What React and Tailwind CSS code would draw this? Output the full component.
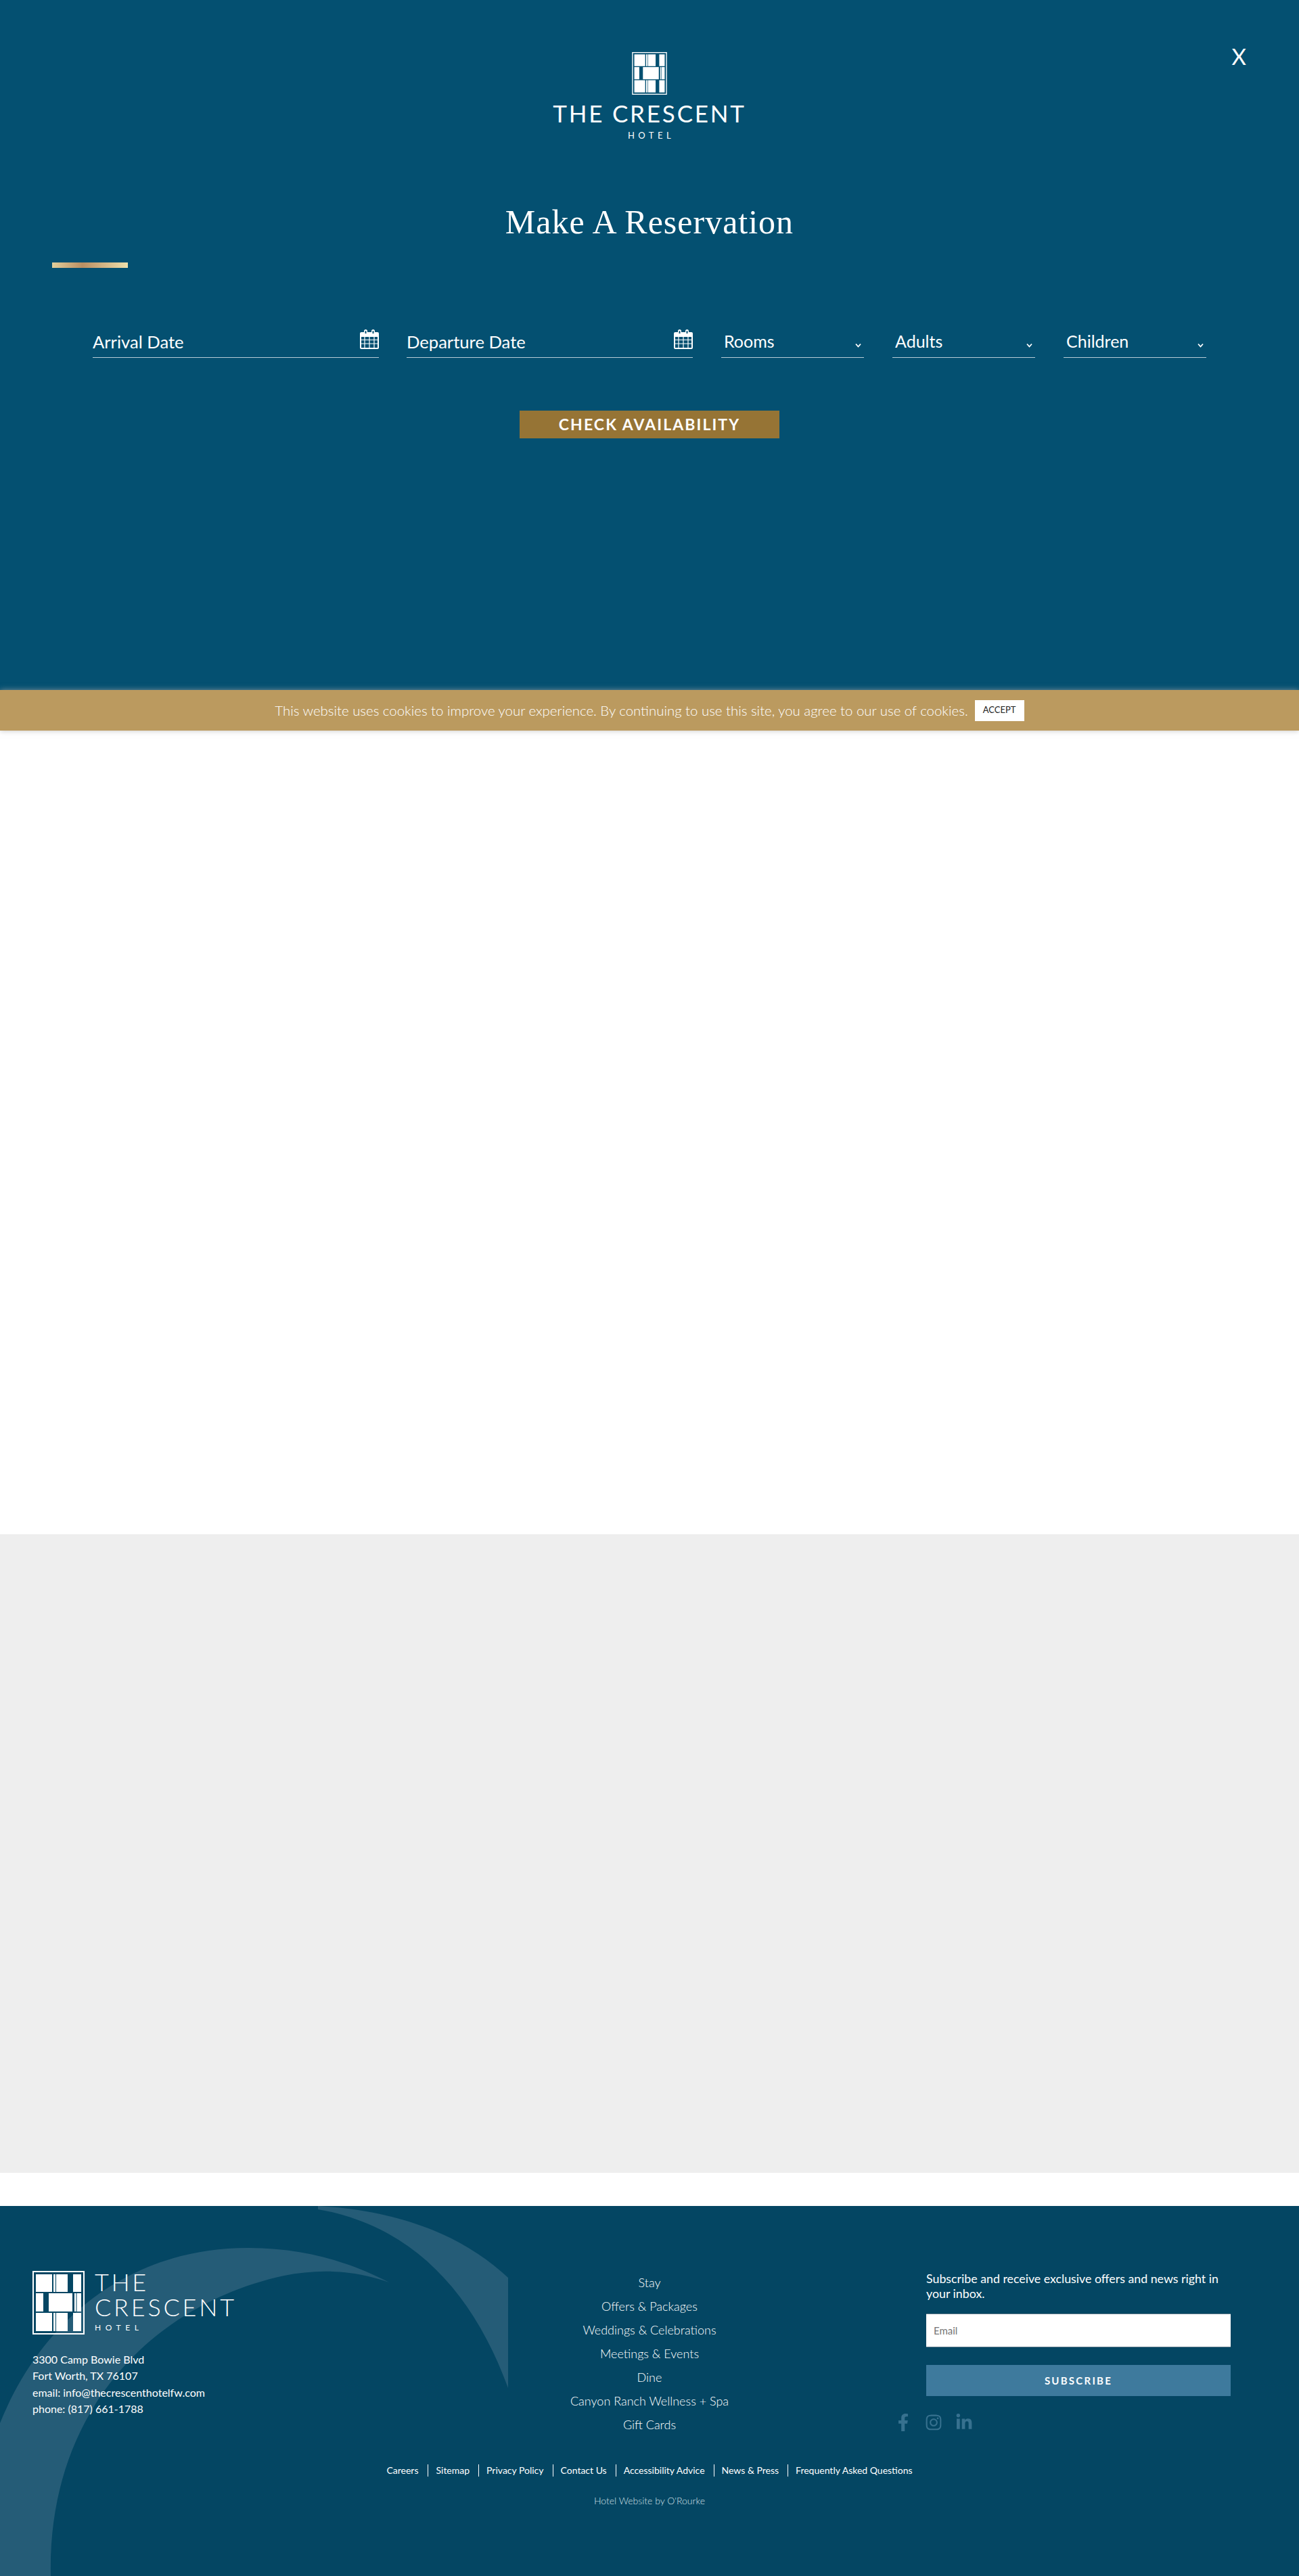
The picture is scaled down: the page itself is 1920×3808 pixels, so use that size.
import { FaFacebookF, FaInstagram, FaLinkedinIn } from "react-icons/fa";

const lato = { fontFamily: "Lato, sans-serif" };

function LogoMark({ className, frame = "#ffffff" }) {
  const rows = [
    { y: 5, h: 26, cells: [[5, 24], [31, 3], [35, 17], [60, 12]] },
    { y: 33, h: 27, cells: [[5, 11], [24, 35], [62, 2.5], [65.5, 6.5]] },
    { y: 62, h: 27, cells: [[5, 24], [31, 3], [35, 17], [60, 12]] },
  ];
  return (
    <svg viewBox="0 0 77 94" className={className}>
      <rect x="1" y="1" width="75" height="92" fill="none" stroke={frame} strokeWidth="2" />
      {rows.map((row) =>
        row.cells.map(([x, w]) => (
          <rect key={`${row.y}-${x}`} x={x} y={row.y} width={w} height={row.h} fill="#ffffff" />
        ))
      )}
    </svg>
  );
}

function CalendarIcon() {
  return (
    <svg viewBox="0 0 28 29" className="w-[28px] h-[29px] shrink-0">
      <path d="M2 4h4V2.5a2.5 2.5 0 0 1 5 0V4h6V2.5a2.5 2.5 0 0 1 5 0V4h4a2 2 0 0 1 2 2v5H0V6a2 2 0 0 1 2-2z" fill="#ffffff" />
      <path d="M7.5 3a1 1 0 0 1 2 0v3h-2zM18.5 3a1 1 0 0 1 2 0v3h-2z" fill="#045071" />
      <path d="M1 10h26v17a1 1 0 0 1-1 1H2a1 1 0 0 1-1-1z" fill="none" stroke="#ffffff" strokeWidth="2" />
      <path d="M7 11v16M14 11v16M21 11v16M2 15.5h24M2 21h24" stroke="#ffffff" strokeWidth="1.2" />
    </svg>
  );
}

function Chevron() {
  return (
    <svg viewBox="0 0 9 7" className="w-[9px] h-[7px] mt-[6px]">
      <path d="M1 1.5l3.5 4 3.5-4" fill="none" stroke="#ffffff" strokeWidth="1.8" />
    </svg>
  );
}

function DateField({ label }) {
  return (
    <div className="w-[423px] h-[42px] flex items-start justify-between border-b border-[#b7ccd6]">
      <span className="text-[25.6px] leading-[33px] mt-[2px] text-white">{label}</span>
      <CalendarIcon />
    </div>
  );
}

function SelectField({ label }) {
  return (
    <div className="w-[211px] h-[42px] pl-[4px] pr-[4px] flex items-center justify-between border-b border-[#b7ccd6]">
      <span className="text-[25px] leading-[33px] text-white -mt-[6px]">{label}</span>
      <Chevron />
    </div>
  );
}

function Reservation() {
  return (
    <section className="relative h-[1020px] bg-[#045071] pt-[77px] flex flex-col items-center text-white" style={lato}>
      <button className="absolute top-[59px] right-[78px] text-[33px] leading-[48px] font-normal">X</button>
      <LogoMark className="w-[52px] h-[63px]" />
      <div className="mt-[6px] text-[35px] leading-[42px] font-normal tracking-[0.08em] whitespace-nowrap">THE CRESCENT</div>
      <div className="mt-[4px] pl-[5px] text-[13px] leading-[16px] tracking-[0.42em]">HOTEL</div>
      <h1 className="mt-[90px] text-[50px] leading-[60px] tracking-[0.02em]" style={{ fontFamily: '"Liberation Serif", serif' }}>
        Make A Reservation
      </h1>
      <div className="self-start ml-[77px] mt-[30px] w-[112px] h-[8px] bg-gradient-to-r from-[#e2cf9c] via-[#b98f63] via-40% to-[#efe0ac]" />
      <div className="self-start ml-[137px] mt-[91px] flex">
        <DateField label="Arrival Date" />
        <div className="ml-[41px]">
          <DateField label="Departure Date" />
        </div>
        <div className="ml-[42px] flex gap-[42px]">
          <SelectField label="Rooms" />
          <SelectField label="Adults" />
          <SelectField label="Children" />
        </div>
      </div>
      <button className="mt-[78px] w-[384px] h-[41px] bg-[#967435] text-[23px] font-bold tracking-[0.09em] text-white">
        CHECK AVAILABILITY
      </button>
    </section>
  );
}

function CookieBar() {
  return (
    <div className="relative z-10 h-[60px] bg-[#bb9a5f] flex items-center justify-center shadow-[0_0_8px_rgba(170,170,170,0.7)]" style={lato}>
      <span className="text-[20.4px] font-light text-white whitespace-nowrap">
        This website uses cookies to improve your experience. By continuing to use this site, you agree to our use of cookies.
      </span>
      <button className="ml-[10px] w-[73px] h-[31px] bg-white text-[13px] text-[#222222]">ACCEPT</button>
    </div>
  );
}

function FooterSwooshes() {
  return (
    <svg viewBox="0 1 1920 547" className="absolute inset-0 w-full h-full" aria-hidden="true">
      <path
        d="M0 322C70 150 210 62 368 63C450 63 520 85 575 114C520 95 470 94 420 104C230 145 70 300 75 548H0Z"
        fill="#255c77"
      />
      <path d="M470 1C600 8 690 50 751 107V270C700 130 610 30 470 6Z" fill="#255c77" />
    </svg>
  );
}

function Footer() {
  const nav = ["Stay", "Offers & Packages", "Weddings & Celebrations", "Meetings & Events", "Dine", "Canyon Ranch Wellness + Spa", "Gift Cards"];
  const links = ["Careers", "Sitemap", "Privacy Policy", "Contact Us", "Accessibility Advice", "News & Press", "Frequently Asked Questions"];
  return (
    <footer className="relative h-[547px] bg-[#044663] text-white overflow-hidden" style={lato}>
      <FooterSwooshes />
      <div className="relative flex pt-[96px]">
        <div className="w-[760px] pl-[48px]">
          <div className="flex">
            <LogoMark className="w-[77px] h-[94px]" />
            <div className="ml-[15px] -mt-[2px] font-light">
              <div className="text-[36px] leading-[36.5px] tracking-[0.1em]">THE</div>
              <div className="text-[36px] leading-[36.5px] tracking-[0.105em] whitespace-nowrap">CRESCENT</div>
              <div className="mt-[5px] text-[12px] leading-[16px] tracking-[0.55em] font-normal">HOTEL</div>
            </div>
          </div>
          <div className="mt-[25px] text-[16px] leading-[24.4px]">
            <div>3300 Camp Bowie Blvd</div>
            <div>Fort Worth, TX 76107</div>
            <div>email: info@thecrescenthotelfw.com</div>
            <div>phone: (817) 661-1788</div>
          </div>
        </div>
        <ul className="w-[400px] text-center text-[18px] leading-[35px] font-light">
          {nav.map((item) => (
            <li key={item}>{item}</li>
          ))}
        </ul>
        <div className="ml-[209px] w-[450px]">
          <p className="text-[17.8px] leading-[22px]">Subscribe and receive exclusive offers and news right in your inbox.</p>
          <div className="mt-[19px] h-[50px] bg-white border-y border-[#5b7686] pl-[11px] flex items-center text-[15px] text-[#757575]">Email</div>
          <button className="mt-[26px] w-full h-[46px] bg-[#3e7a9d] text-[15px] font-bold tracking-[0.15em]">SUBSCRIBE</button>
          <div className="-ml-[47px] mt-[26px] flex items-center gap-[19px] text-[26px] text-[#37718f]">
            <FaFacebookF />
            <FaInstagram />
            <FaLinkedinIn />
          </div>
        </div>
      </div>
      <div className="relative mt-[41px] flex justify-center text-[14px] leading-[18px]">
        {links.map((link, i) => (
          <span
            key={link}
            className={i === 0 ? "pr-[14px]" : i === links.length - 1 ? "pl-[11px] border-l border-white" : "pl-[11px] pr-[13px] border-l border-white"}
          >
            {link}
          </span>
        ))}
      </div>
      <div className="relative mt-[25px] text-center text-[14px] font-light text-[#d3e0e6]">Hotel Website by O'Rourke</div>
    </footer>
  );
}

export default function App() {
  return (
    <div className="w-[1920px]">
      <Reservation />
      <CookieBar />
      <div className="h-[1188px] bg-white" />
      <div className="h-[944px] bg-[#eeeeee]" />
      <div className="h-[49px] bg-white" />
      <Footer />
    </div>
  );
}
